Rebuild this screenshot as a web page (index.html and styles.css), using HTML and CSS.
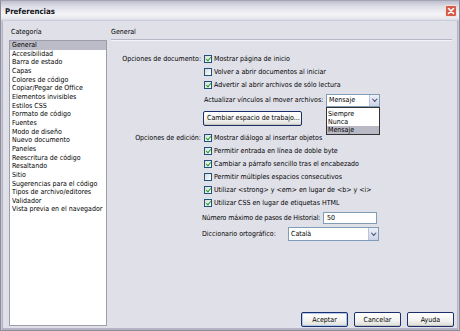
FILE: index.html
```html
<!DOCTYPE html>
<html lang="es">
<head>
<meta charset="utf-8">
<title>Preferencias</title>
<link rel="stylesheet" href="styles.css">
</head>
<body>
<div class="window">
  <div class="titlebar">
    <span class="title">Preferencias</span>
    <span class="close"><svg width="12" height="12" viewBox="0 0 12 12"><rect x="0.5" y="0.5" width="11" height="11" rx="1.5" fill="#d65a48" stroke="#f3e2dc"/><path d="M3.5 3.5 L8.5 8.5 M8.5 3.5 L3.5 8.5" stroke="#fff" stroke-width="1.6" stroke-linecap="round"/></svg></span>
  </div>
  <div class="body">
    <div class="main">
      <div class="left">
        <div class="label">Categoría</div>
        <ul class="list">
          <li class="sel">General</li>
          <li>Accesibilidad</li>
          <li>Barra de estado</li>
          <li>Capas</li>
          <li>Colores de código</li>
          <li>Copiar/Pegar de Office</li>
          <li>Elementos invisibles</li>
          <li>Estilos CSS</li>
          <li>Formato de código</li>
          <li>Fuentes</li>
          <li>Modo de diseño</li>
          <li>Nuevo documento</li>
          <li>Paneles</li>
          <li>Reescritura de código</li>
          <li>Resaltando</li>
          <li>Sitio</li>
          <li>Sugerencias para el código</li>
          <li>Tipos de archivo/editores</li>
          <li>Validador</li>
          <li>Vista previa en el navegador</li>
        </ul>
      </div>
      <div class="right">
        <div class="section-title">General</div>
        <div class="form">
          <div class="row first">
            <span class="rlabel">Opciones de documento:</span>
            <span class="cb on"></span><span>Mostrar página de inicio</span>
          </div>
          <div class="row">
            <span class="rlabel"></span>
            <span class="cb"></span><span>Volver a abrir documentos al iniciar</span>
          </div>
          <div class="row">
            <span class="rlabel"></span>
            <span class="cb on"></span><span>Advertir al abrir archivos de sólo lectura</span>
          </div>
          <div class="row sel-row">
            <span class="rlabel"></span>
            <span class="wide">Actualizar vínculos al mover archivos:</span>
            <span class="select s-msg"><span class="val">Mensaje</span><span class="arrow"></span>
              <span class="dropdown">
                <span class="opt">Siempre</span>
                <span class="opt">Nunca</span>
                <span class="opt hl">Mensaje</span>
              </span>
            </span>
          </div>
          <div class="row btn-row">
            <span class="rlabel"></span>
            <span class="btn wsbtn">Cambiar espacio de trabajo...</span>
          </div>
          <div class="row edit-first">
            <span class="rlabel">Opciones de edición:</span>
            <span class="cb on"></span><span>Mostrar diálogo al insertar objetos</span>
          </div>
          <div class="row">
            <span class="rlabel"></span>
            <span class="cb on"></span><span>Permitir entrada en línea de doble byte</span>
          </div>
          <div class="row">
            <span class="rlabel"></span>
            <span class="cb on"></span><span>Cambiar a párrafo sencillo tras el encabezado</span>
          </div>
          <div class="row">
            <span class="rlabel"></span>
            <span class="cb"></span><span>Permitir múltiples espacios consecutivos</span>
          </div>
          <div class="row">
            <span class="rlabel"></span>
            <span class="cb on"></span><span>Utilizar &lt;strong&gt; y &lt;em&gt; en lugar de &lt;b&gt; y &lt;i&gt;</span>
          </div>
          <div class="row">
            <span class="rlabel"></span>
            <span class="cb on"></span><span>Utilizar CSS en lugar de etiquetas HTML</span>
          </div>
          <div class="row hist-row">
            <span class="rlabel"></span>
            <span class="hist-label">Número máximo de pasos de Historial:</span>
            <span class="input">50</span>
          </div>
          <div class="row dict-row">
            <span class="rlabel"></span>
            <span class="dict-label">Diccionario ortográfico:</span>
            <span class="select s-dict"><span class="val">Català</span><span class="arrow"></span></span>
          </div>
        </div>
      </div>
    </div>
    <div class="buttons">
      <span class="btn act">Aceptar</span>
      <span class="btn">Cancelar</span>
      <span class="btn">Ayuda</span>
    </div>
  </div>
</div>
</body>
</html>
```

FILE: styles.css
```css
* { box-sizing: border-box; }
html, body { margin: 0; padding: 0; }
body {
  width: 460px;
  height: 331px;
  overflow: hidden;
  background: #ffffff;
  font-family: "DejaVu Sans Condensed", "Liberation Sans", sans-serif;
  font-size: 7px;
  color: #000;
}
.window {
  width: 460px;
  height: 331px;
  background: #e0e0e9;
  border: 1px solid #8c8c9c;
  border-top-color: #a4a4b4;
  display: flex;
  flex-direction: column;
  box-shadow: inset 1px 0 0 #c8c8d4, inset 2px 0 0 #b4b4c4, inset -1px 0 0 #c8c8d4, inset -2px 0 0 #b4b4c4, inset 0 -2px 0 #b4b4c4;
}
.titlebar {
  height: 20px;
  flex: none;
  display: flex;
  align-items: center;
  justify-content: space-between;
  padding: 0 2px 0 4px;
  background: linear-gradient(#bdbdcd 0%, #dcdce6 25%, #f5f5f8 65%, #e6e6ee 90%, #c4c4d2 100%);
}
.title {
  font-weight: bold;
  font-size: 7.8px;
  padding-top: 1px;
  color: #101018;
}
.close { display: flex; margin-top: -1px; }
.body {
  flex: 1;
  display: flex;
  flex-direction: column;
  padding: 6px 5px 3px 8px;
}
.main {
  flex: 1;
  display: flex;
}
.left {
  width: 98px;
  display: flex;
  flex-direction: column;
}
.label {
  height: 13px;
  padding-left: 2px;
  line-height: 10px;
}
.list {
  flex: 1;
  margin: 0;
  padding: 0;
  list-style: none;
  background: #fff;
  border: 1px solid #9d9dae;
  margin-bottom: -14px;
}
.list li {
  height: 8.66px;
  line-height: 8.66px;
  padding-left: 2px;
  white-space: nowrap;
}
.list li.sel { background: #bcbcc8; }
.right {
  flex: 1;
  margin-left: 4px;
  display: flex;
  flex-direction: column;
}
.section-title {
  height: 13px;
  line-height: 10px;
  border-bottom: 1px solid #b7b7c6;
  box-shadow: 0 1px 0 #f4f4f8;
  margin-right: 2px;
}
.form {
  display: flex;
  flex-direction: column;
}
.row {
  display: flex;
  align-items: center;
  height: 13px;
  white-space: nowrap;
}
.row.first { margin-top: 12px; }
.rlabel {
  width: 93px;
  flex: none;
  text-align: right;
  padding-right: 3px;
}
.cb {
  width: 8px;
  height: 8px;
  flex: none;
  border: 1px solid #1c5180;
  background: linear-gradient(135deg, #dcdcd6, #fbfbf9);
  margin-right: 2px;
  position: relative;
}
.cb.on::after {
  content: "";
  position: absolute;
  left: 1.5px;
  top: 0.3px;
  width: 2px;
  height: 4px;
  border: solid #21a121;
  border-width: 0 1.4px 1.4px 0;
  transform: rotate(40deg);
}
.sel-row { height: 14px; margin-top: 2px; }
.wide { width: 122px; flex: none; }
.select {
  position: relative;
  display: flex;
  align-items: center;
  height: 13px;
  background: #fff;
  border: 1px solid #7f9db9;
}
.select .val { flex: 1; padding-left: 2px; }
.select .arrow {
  width: 10px;
  height: 11px;
  background: linear-gradient(#eef0f8, #cdd4e6);
  border-left: 1px solid #b8c4dc;
  position: relative;
}
.select .arrow::after {
  content: "";
  position: absolute;
  left: 3px;
  top: 2.5px;
  width: 2.5px;
  height: 2.5px;
  border: solid #3c4a6a;
  border-width: 0 1.3px 1.3px 0;
  transform: rotate(45deg);
}
.s-msg { width: 54px; }
.dropdown {
  position: absolute;
  left: -1px;
  top: 12px;
  width: 54px;
  height: 28px;
  background: #fff;
  border: 1px solid #333;
  display: flex;
  flex-direction: column;
  padding-top: 2px;
}
.opt {
  height: 8.3px;
  line-height: 8.3px;
  padding-left: 1px;
}
.opt.hl { background: #b9b9c5; height: 8px; }
.btn {
  display: inline-flex;
  align-items: center;
  justify-content: center;
  height: 15px;
  border: 1px solid #1d2f6a;
  border-radius: 2px;
  background: linear-gradient(#ffffff, #f2f2f0 60%, #dcdcd6);
  box-shadow: inset 0 -1px 0 #c8c8c0;
}
.btn-row { height: 20px; margin-top: 1px; }
.wsbtn { width: 99px; justify-content: flex-start; padding-left: 3px; margin-left: -1px; }
.edit-first { margin-top: 3px; }
.hist-row { height: 15px; margin-top: 1px; }
.hist-label { width: 121px; flex: none; margin-left: -2px; letter-spacing: -0.12px; }
.input {
  width: 54px;
  height: 12px;
  background: #fff;
  border: 1px solid #7f9db9;
  padding-left: 3px;
  display: flex;
  align-items: center;
}
.dict-row { height: 16px; margin-top: 1px; }
.dict-label { width: 86px; flex: none; margin-left: -2px; }
.s-dict { width: 91px; height: 14px; }
.s-dict .arrow { height: 12px; }
.buttons {
  display: flex;
  justify-content: flex-end;
  gap: 6px;
  height: 15px;
  flex: none;
}
.buttons .btn { width: 47px; }
.buttons .btn.act {
  box-shadow: inset 0 0 0 1px #aec8ef, inset 0 -1px 0 #c8c8c0;
}
```
